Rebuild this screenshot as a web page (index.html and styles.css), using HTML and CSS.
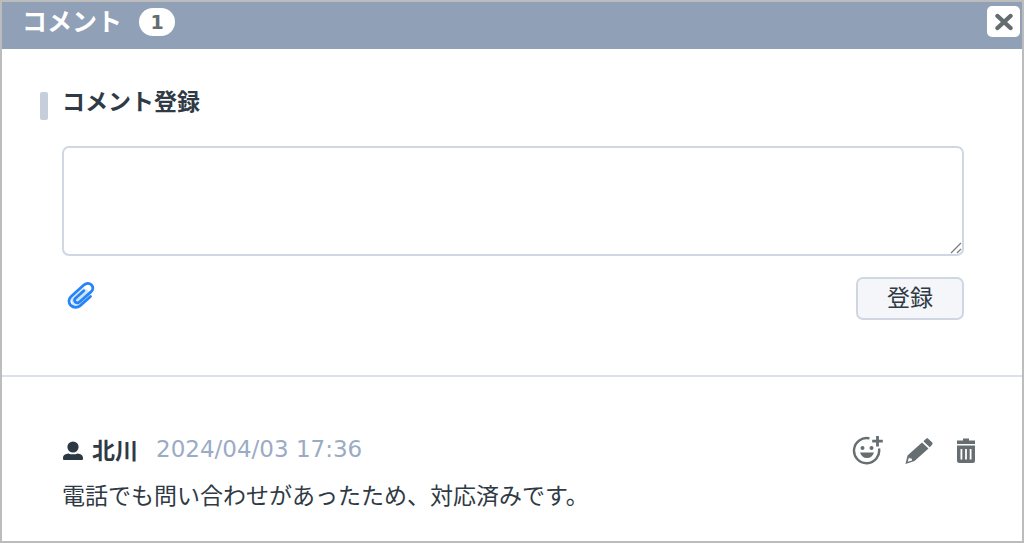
FILE: index.html
```html
<!DOCTYPE html>
<html lang="ja">
<head>
<meta charset="utf-8">
<title>コメント</title>
<link rel="stylesheet" href="styles.css">
</head>
<body>
<main class="panel">
  <header class="panel-header">
    <h1 class="panel-title">コメント</h1>
    <span class="count">1</span>
    <button class="close" type="button" aria-label="閉じる">
      <svg width="20" height="18" viewBox="0 0 20 18"><path d="M3.500 3L16.500 15M16.500 3L3.500 15" fill="none" stroke="currentColor" stroke-width="4.4" stroke-linecap="round"/></svg>
    </button>
  </header>
  <form class="entry">
    <h2 class="entry-title"><label for="comment">コメント登録</label></h2>
    <div class="entry-body">
      <div class="field">
        <textarea class="entry-text" id="comment"></textarea>
        <svg class="grip" width="14" height="14" viewBox="0 0 14 14"><path d="M2 12L12 2M8 12L12 8" fill="none" stroke="#77797c" stroke-width="1.2"/></svg>
      </div>
      <div class="entry-actions">
        <button class="attach" type="button" aria-label="ファイルを添付">
          <svg width="28" height="28" viewBox="0 0 28 28"><path d="M4 18L16.500 7L22 10L11 23L6 24Z" fill="#cfe4ff"/><g fill="none" stroke="#2684f7" stroke-width="2.8" stroke-linecap="round" stroke-linejoin="round"><path d="M23.500 15.500L13.200 24.600C10.600 26.800 6.500 26.900 3.800 24.400C1.300 21.900 1.400 18.200 3.900 15.800L16.500 4.300C18.900 2.200 22.200 1.800 24.300 3.800C26.600 5.900 26.200 8.700 24.200 10.600L12.800 20.800C11.400 22 9.500 22.200 8.300 21C7.100 19.900 7.300 18.400 8.500 17.200L16.800 9.800"/></g></svg>
        </button>
        <button class="submit" type="button">登録</button>
      </div>
    </div>
  </form>
  <article class="comment">
    <div class="comment-head">
      <svg class="user" width="22" height="20" viewBox="0 0 22 20"><ellipse cx="11" cy="6" rx="5.600" ry="5.600"/><path d="M2 19Q1 19 1 18V16.800C1 14 3.800 12.600 6.300 12.400C9 13.600 13 13.600 15.700 12.400C18.200 12.600 21 14 21 16.800V18Q21 19 20 19Z"/></svg>
      <span class="author">北川</span>
      <time class="date" datetime="2024-04-03T17:36">2024/04/03 17:36</time>
      <div class="tools">
        <button class="tool" type="button" aria-label="リアクションを追加">
          <svg width="32" height="30" viewBox="0 0 32 30"><path d="M17.500 2.400A12.600 12.600 0 1 0 27 12.500" fill="none" stroke="currentColor" stroke-width="2.400"/><path d="M25.500 0V10.500M20.200 5.200H30.800" stroke="currentColor" stroke-width="2.800"/><circle cx="10.500" cy="12" r="2"/><circle cx="19.500" cy="12" r="2"/><path d="M8 16.500H22C21 20 18.500 22 15 22S9 20 8 16.500Z"/></svg>
        </button>
        <button class="tool" type="button" aria-label="編集">
          <svg width="30" height="30" viewBox="0 0 30 30"><path fill-rule="evenodd" d="M17 6.500L23.500 12.500L9.500 25L0.500 28L2.500 19.500ZM4 21.200L2.700 25.800L7 24.500L6.800 22.400L4.800 22.600Z"/><path d="M18.400 5.200L21.400 2.600C22 2.100 22.600 2.100 23.200 2.700L27.200 6.600C27.800 7.200 27.700 7.900 27.200 8.500L24.800 11.200Z"/></svg>
        </button>
        <button class="tool" type="button" aria-label="削除">
          <svg width="22" height="30" viewBox="0 0 22 30"><path d="M1 4.500H7V2.500H13V4.500H19V8H1Z"/><path fill-rule="evenodd" d="M1 9.500H19V24.500Q19 27 16.500 27H3.500Q1 27 1 24.500ZM4.500 13V23.500H6.300V13ZM9.100 13V23.500H10.900V13ZM13.700 13V23.500H15.500V13Z"/></svg>
        </button>
      </div>
    </div>
    <p class="comment-text">電話でも問い合わせがあったため、対応済みです。</p>
  </article>
</main>
</body>
</html>
```
FILE: styles.css
```css
* {
  box-sizing: border-box;
}

body {
  margin: 0;
  background: #fff;
  color: #2f3a45;
  font: 23px/32px "Noto Sans CJK JP", sans-serif;
}

button {
  padding: 0;
  border: 0;
  background: none;
  color: inherit;
  font-family: inherit;
  cursor: pointer;
}

svg {
  display: block;
  fill: currentColor;
}

.panel {
  min-height: 100vh;
  border: 2px solid #bcbcbc;
}

.panel-header {
  display: flex;
  align-items: flex-start;
  padding: 4px 2px 12px 20px;
  background: #90a0b7;
  color: #fff;
}

.panel-title {
  margin: 0;
  font-size: 25px;
  line-height: 28px;
  font-weight: 700;
}

.count {
  margin: 2px 0 0 17px;
  width: 36px;
  border-radius: 14px;
  background: #fff;
  color: #646c73;
  font: 700 19px/28px "DejaVu Sans", sans-serif;
  text-align: center;
}

.close {
  display: grid;
  place-items: center;
  width: 33px;
  height: 31px;
  margin-left: auto;
  border-radius: 5px;
  background: #fff;
  color: #646c70;
}

.entry {
  padding: 35px 58px 55px 38px;
  border-bottom: 2px solid #dbe0ea;
}

.entry-title {
  display: flex;
  align-items: flex-start;
  gap: 14px;
  margin: 0;
  font-size: 23px;
  line-height: 32px;
  font-weight: 700;
}

.entry-title::before {
  content: "";
  width: 8px;
  height: 28px;
  margin-top: 8px;
  border-radius: 2px;
  background: #c6cedc;
}

.entry-body {
  padding: 26px 0 0 22px;
}

.field {
  position: relative;
}

.entry-text {
  display: block;
  width: 100%;
  height: 110px;
  padding: 8px;
  border: 2px solid #d1d7e2;
  border-radius: 7px;
  background: #fff;
  color: inherit;
  font: inherit;
  resize: none;
}

.grip {
  position: absolute;
  right: 1px;
  bottom: 1px;
}

.entry-actions {
  display: flex;
  justify-content: space-between;
  align-items: flex-start;
  padding-top: 21px;
}

.attach {
  margin: 4px 0 0 5px;
}

.submit {
  width: 108px;
  height: 43px;
  padding-bottom: 6px;
  border: 2px solid #d1d7e2;
  border-radius: 7px;
  background: #f5f6f9;
  font-size: 23px;
}

.comment {
  padding: 56px 44px 30px 60px;
}

.comment-head {
  display: flex;
  align-items: flex-start;
}

.user {
  margin-top: 8px;
  color: #2c3843;
}

.author {
  margin-left: 8px;
  font-weight: 700;
}

.date {
  margin-left: 18px;
  color: #9babc5;
  font-family: "DejaVu Sans", sans-serif;
}

.tools {
  display: flex;
  gap: 21px;
  margin: 3px 0 0 auto;
  color: #666e72;
}

.comment-text {
  margin: 12px 0 0;
}
```
